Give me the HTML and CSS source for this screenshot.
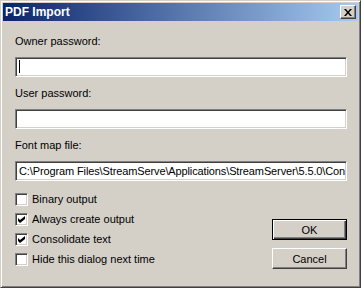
FILE: index.html
```html
<!DOCTYPE html>
<html lang="en">
<head>
    <meta charset="UTF-8">
    <title>PDF Import</title>
    <link rel="stylesheet" href="styles.css">
</head>
<body>
    <div class="window">
        <div class="titlebar">
            <span class="title">PDF Import</span>
            <button class="close">
                <svg width="8" height="7" viewBox="0 0 8 7"><path d="M0 0h2l2 2.5 2-2.5h2l-3 3.5 3 3.5h-2l-2-2.5-2 2.5h-2l3-3.5z" fill="#000"/></svg>
            </button>
        </div>

        <div class="content">
            <div class="label">Owner password:</div>
            <div class="field"><span class="caret"></span></div>

            <div class="label">User password:</div>
            <div class="field"></div>

            <div class="label">Font map file:</div>
            <div class="field path">C:\Program Files\StreamServe\Applications\StreamServer\5.5.0\Con</div>

            <div class="bottom">
                <ul class="checks">
                    <li><span class="box"></span>Binary output</li>
                    <li><span class="box"><svg width="7" height="7" viewBox="0 0 7 7"><path d="M0 2l2 2 5-4v3l-5 4-2-2z" fill="#000"/></svg></span>Always create output</li>
                    <li><span class="box"><svg width="7" height="7" viewBox="0 0 7 7"><path d="M0 2l2 2 5-4v3l-5 4-2-2z" fill="#000"/></svg></span>Consolidate text</li>
                    <li><span class="box"></span>Hide this dialog next time</li>
                </ul>
                <div class="buttons">
                    <button class="btn default">OK</button>
                    <button class="btn">Cancel</button>
                </div>
            </div>
        </div>
    </div>
</body>
</html>
```

FILE: styles.css
```css
body {
    margin: 0;
    font-family: "Liberation Sans", sans-serif;
    font-size: 11px;
    color: #000;
}
.window {
    width: 361px;
    height: 288px;
    box-sizing: border-box;
    background-color: #d4d0c8;
    border: 1px solid;
    border-color: #d4d0c8 #404040 #404040 #d4d0c8;
    box-shadow: inset 1px 1px #fff, inset -1px -1px #808080;
    padding: 2px;
}
.titlebar {
    height: 18px;
    margin-bottom: 1px;
    display: flex;
    align-items: center;
    justify-content: space-between;
    padding: 0 2px 0 2px;
    background: linear-gradient(to right, #0a246a, #a6caf0);
}
.title {
    color: #fff;
    font-weight: bold;
    font-size: 12px;
}
.close {
    width: 16px;
    height: 14px;
    padding: 0;
    margin: 0;
    display: flex;
    align-items: center;
    justify-content: center;
    background-color: #d4d0c8;
    border: 1px solid;
    border-color: #fff #404040 #404040 #fff;
    box-shadow: inset -1px -1px #808080;
}
.content {
    padding: 11px 11px 0 12px;
}
.label {
    line-height: 16px;
}
.field {
    height: 20px;
    box-sizing: border-box;
    margin: 8px 0;
    background-color: #fff;
    border: 1px solid;
    border-color: #808080 #fff #fff #808080;
    box-shadow: inset 1px 1px #404040, inset -1px -1px #d4d0c8;
    padding: 2px 2px 0 3px;
    line-height: 15px;
    white-space: nowrap;
    overflow: hidden;
}
.path {
    letter-spacing: -0.12px;
}
.caret {
    display: inline-block;
    width: 1px;
    height: 13px;
    background-color: #000;
    vertical-align: top;
}
.bottom {
    display: flex;
    justify-content: space-between;
    align-items: flex-start;
    margin-top: 5px;
}
.checks {
    list-style: none;
    margin: 0;
    padding: 0;
}
.checks li {
    height: 20px;
    display: flex;
    align-items: center;
}
.box {
    width: 13px;
    height: 13px;
    box-sizing: border-box;
    margin-right: 4px;
    background-color: #fff;
    border: 1px solid;
    border-color: #808080 #fff #fff #808080;
    box-shadow: inset 1px 1px #404040, inset -1px -1px #d4d0c8;
    display: flex;
    align-items: center;
    justify-content: center;
}
.buttons {
    display: flex;
    flex-direction: column;
    gap: 8px;
    margin-top: 30px;
}
.btn {
    width: 75px;
    height: 21px;
    box-sizing: border-box;
    padding: 0;
    font-family: inherit;
    font-size: 11px;
    background-color: #d4d0c8;
    border: 1px solid;
    border-color: #fff #404040 #404040 #fff;
    box-shadow: inset -1px -1px #808080;
}
.btn.default {
    border: 1px solid #000;
    box-shadow: inset 1px 1px #fff, inset -1px -1px #404040, inset -2px -2px #808080;
}
```
